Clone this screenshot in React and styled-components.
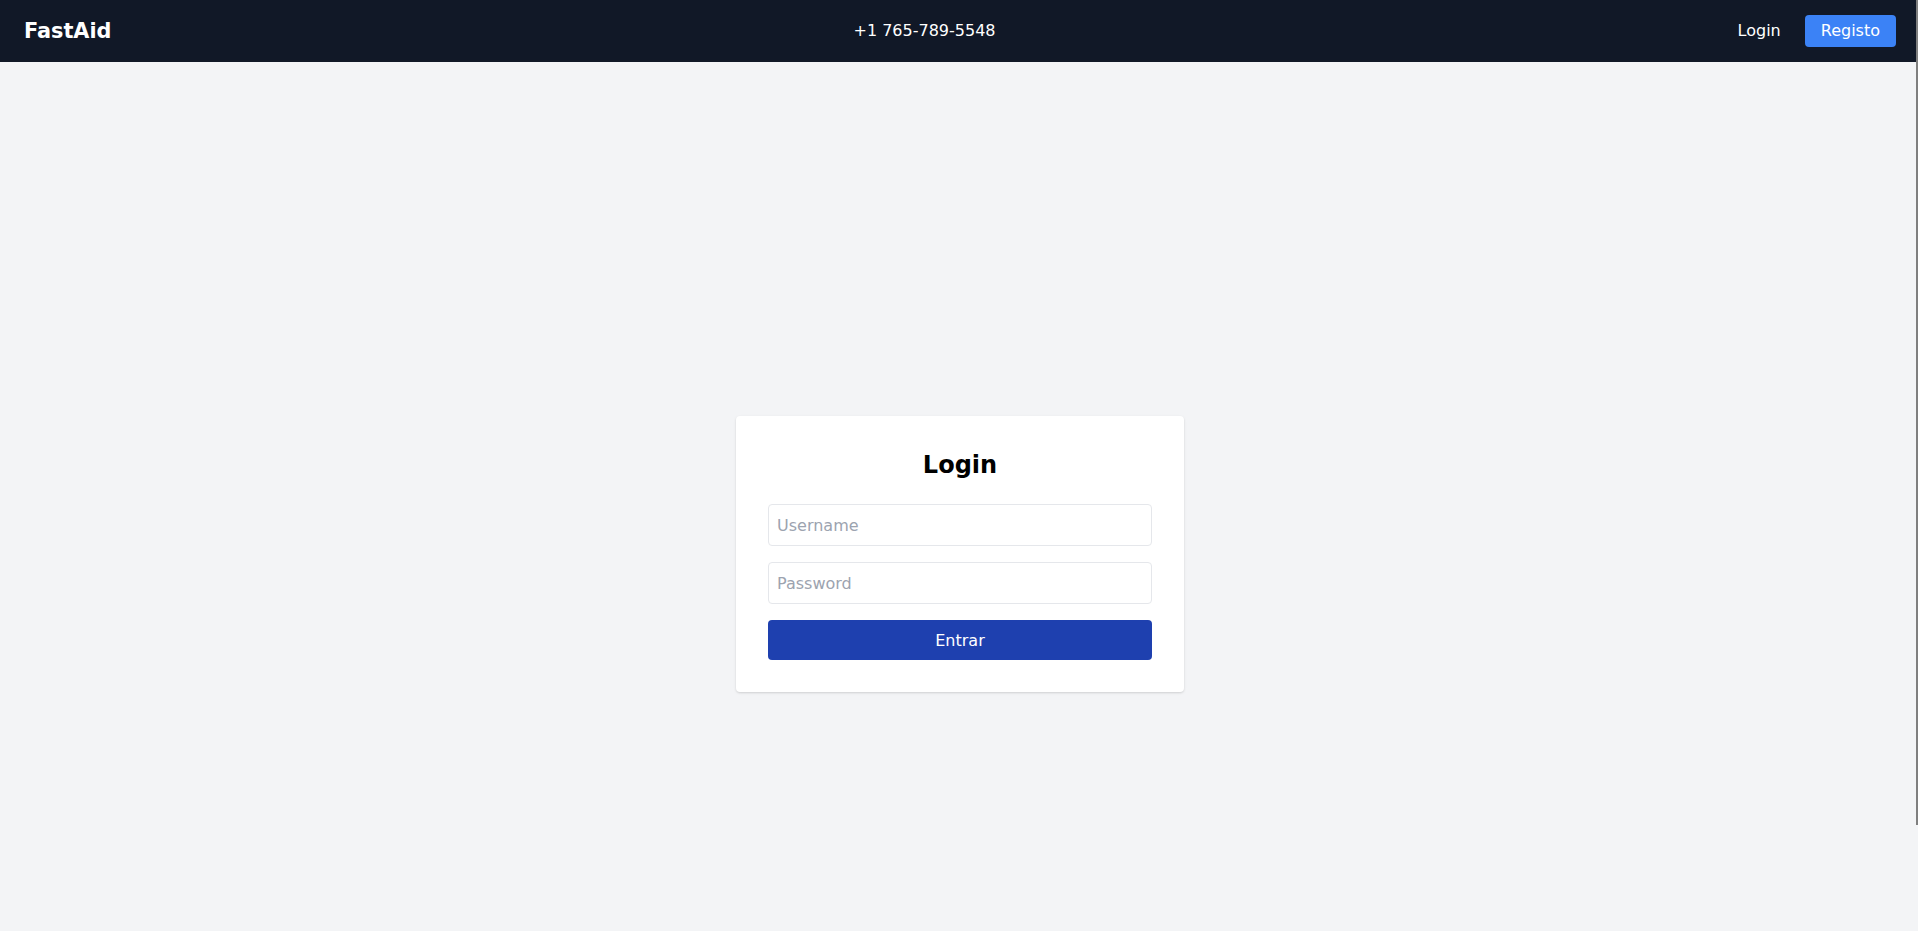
import React from 'react'
import styled, { createGlobalStyle } from 'styled-components'

const GlobalStyle = createGlobalStyle`
  * { box-sizing: border-box; }
  html, body { overflow-x: hidden; }
  body {
    margin: 0;
    background: #f3f4f6;
    font-family: "DejaVu Sans", "Liberation Sans", sans-serif;
  }
`

const Page = styled.div`
  width: 1920px;
`

const ScrollThumb = styled.div`
  position: fixed;
  top: 0;
  right: 0;
  width: 2px;
  height: 825px;
  background: #7f7f7f;
`

const Header = styled.header`
  height: 62px;
  background: #111827;
  color: #ffffff;
  display: flex;
  align-items: center;
  justify-content: space-between;
  padding: 0 24px;
`

const Brand = styled.div`
  font-size: 20.8px;
  font-weight: 700;
  line-height: 28px;
`

const Phone = styled.span`
  font-size: 16px;
  line-height: 24px;
`

const Nav = styled.nav`
  display: flex;
  align-items: center;
  gap: 24px;
`

const NavLink = styled.a`
  font-size: 16px;
  line-height: 24px;
  color: #ffffff;
  text-decoration: none;
  padding: 4px 0;
  border-radius: 4px;
  ${p => p.$primary && `
    background: #3b82f6;
    padding: 4px 16px;
  `}
`

const Main = styled.main`
  min-height: calc(100vh + 53px);
  display: flex;
  align-items: center;
  justify-content: center;
`

const Card = styled.form`
  width: 448px;
  background: #ffffff;
  border-radius: 4px;
  padding: 32px;
  box-shadow: 0 1px 3px rgba(0, 0, 0, 0.1), 0 1px 2px rgba(0, 0, 0, 0.06);
  display: flex;
  flex-direction: column;
  gap: 16px;
`

const Title = styled.h2`
  margin: 0 0 8px;
  padding-top: 1px;
  height: 32px;
  font-size: 24px;
  line-height: 32px;
  font-weight: 700;
  text-align: center;
  color: #000000;
`

const Input = styled.input`
  width: 100%;
  height: 42px;
  padding: 8px;
  font-size: 16px;
  font-family: inherit;
  border: 1px solid #e5e7eb;
  border-radius: 4px;
  color: #111827;
  outline: none;
  &::placeholder { color: #9ca3af; }
`

const Submit = styled.button`
  width: 100%;
  height: 40px;
  border: none;
  border-radius: 4px;
  background: #1e40af;
  color: #ffffff;
  font-size: 16px;
  font-family: inherit;
  cursor: pointer;
`

export default function App() {
  return (
    <Page>
      <GlobalStyle />
      <Header>
        <Brand>FastAid</Brand>
        <Phone>+1 765-789-5548</Phone>
        <Nav>
          <NavLink href="#">Login</NavLink>
          <NavLink href="#" $primary>Registo</NavLink>
        </Nav>
      </Header>
      <Main>
        <Card onSubmit={e => e.preventDefault()}>
          <Title>Login</Title>
          <Input type="text" placeholder="Username" />
          <Input type="password" placeholder="Password" />
          <Submit type="submit">Entrar</Submit>
        </Card>
      </Main>
      <ScrollThumb />
    </Page>
  )
}
